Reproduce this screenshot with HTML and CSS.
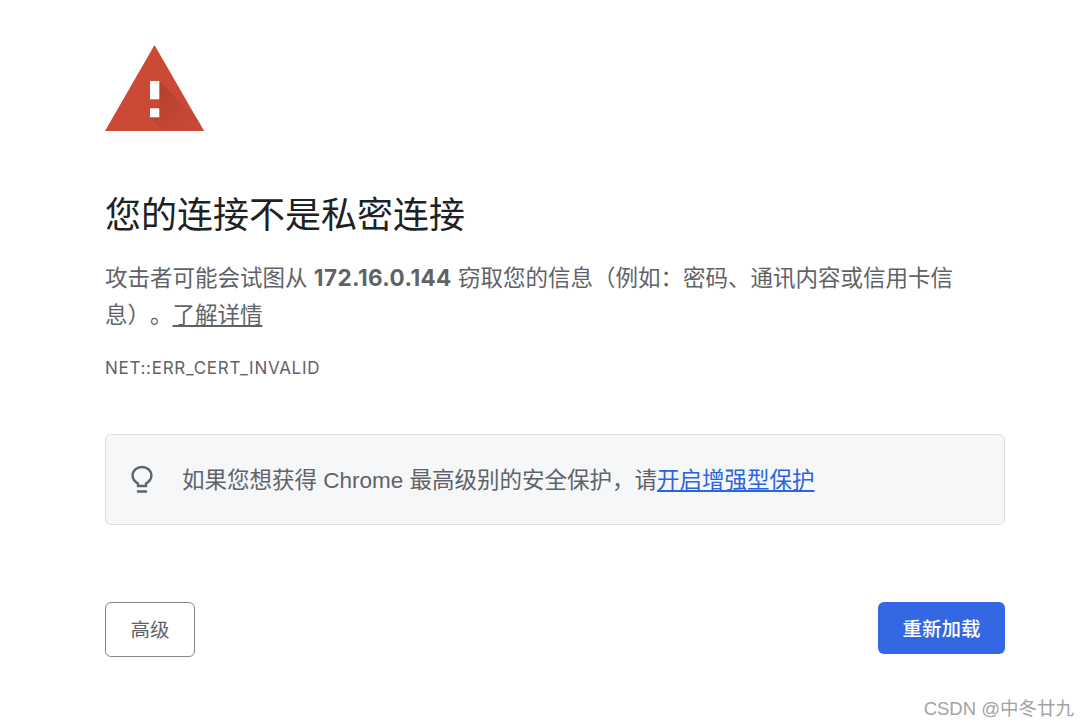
FILE: index.html
```html
<!DOCTYPE html>
<html lang="zh-CN">
<head>
    <meta charset="UTF-8">
    <title>隐私设置错误</title>
    <link rel="stylesheet" href="styles.css">
</head>
<body>
    <div class="interstitial">
        <svg class="warning-icon" width="99" height="86" viewBox="0 0 99 86">
            <defs>
                <linearGradient id="markShadow" x1="45" y1="40" x2="85" y2="80" gradientUnits="userSpaceOnUse">
                    <stop offset="0" stop-color="#b03f2e"/>
                    <stop offset="1" stop-color="#c84935"/>
                </linearGradient>
            </defs>
            <polygon points="49.500,0 99,86 0,86" fill="#cb4a36"/>
            <polygon points="54.300,36 91.800,73.500 99,86 58.700,86 45,72.300 54.300,60" fill="url(#markShadow)"/>
            <rect x="45" y="36" width="9.300" height="18.300" fill="#fff"/>
            <rect x="45" y="63.300" width="9.300" height="9" fill="#fff"/>
        </svg>

        <h1 class="title">您的连接不是私密连接</h1>

        <p class="message">攻击者可能会试图从 <strong>172.16.0.144</strong> 窃取您的信息（例如：密码、通讯内容或信用卡信息）。<a class="learn-more" href="#">了解详情</a></p>

        <div class="error-code">NET::ERR_CERT_INVALID</div>

        <div class="promo">
            <svg class="bulb-icon" width="24" height="30" viewBox="0 0 24 30" fill="none" stroke="#5f6368" stroke-width="2.400">
                <path d="M8 21 V18.600 C4.800 16.800 2.600 14.400 2.600 10.600 C2.600 5.600 6.800 2 12 2 C17.200 2 21.400 5.600 21.400 10.600 C21.400 14.400 19.200 16.800 16 18.600 V21 Z"/>
                <path d="M8 26.500 H16" stroke-linecap="round"/>
            </svg>
            <span class="promo-text">如果您想获得 Chrome 最高级别的安全保护，请<a class="promo-link" href="#">开启增强型保护</a></span>
        </div>

        <div class="actions">
            <button class="button advanced">高级</button>
            <button class="button reload">重新加载</button>
        </div>
    </div>

    <div class="watermark">CSDN @中冬廿九</div>
</body>
</html>
```

FILE: styles.css
```css
html, body {
    height: 100%;
}

body {
    margin: 0;
    background: #fff;
    color: #5f6368;
    font-family: Inter, "Noto Sans CJK SC", sans-serif;
    overflow: hidden;
}

.interstitial {
    width: 900px;
    margin-left: 105px;
    padding-top: 45px;
}

.warning-icon {
    display: block;
}

.title {
    margin: 62px 0 0;
    color: #202124;
    font-size: 36px;
    font-weight: 400;
    line-height: 44px;
}

.message {
    margin: 22px 0 0;
    font-size: 22.500px;
    line-height: 37px;
    text-spacing-trim: space-all;
}

.message strong {
    font-weight: 700;
    letter-spacing: 0.400px;
}

.learn-more {
    color: #5f6368;
}

.error-code {
    margin-top: 23px;
    font-size: 17px;
    line-height: 24px;
    letter-spacing: 0.700px;
}

.promo {
    display: flex;
    align-items: center;
    height: 91px;
    margin-top: 54px;
    padding-left: 24px;
    box-sizing: border-box;
    background: #f6f7f9;
    border: 1px solid #dadce0;
    border-radius: 6px;
}

.bulb-icon {
    flex: none;
}

.promo-text {
    margin-left: 28px;
    padding-top: 2px;
    font-family: "Liberation Sans", "Noto Sans CJK SC", sans-serif;
    font-size: 22.500px;
    line-height: 30px;
}

.promo-link {
    color: #2a64e0;
}

.actions {
    display: flex;
    justify-content: space-between;
    align-items: flex-start;
    margin-top: 77px;
}

.button {
    padding: 0 0 2px;
    font-family: inherit;
    font-size: 19.500px;
    border-radius: 6px;
    cursor: pointer;
}

.advanced {
    width: 90px;
    height: 55px;
    background: #fff;
    color: #5f6368;
    border: 1px solid #80868b;
}

.reload {
    width: 127px;
    height: 52px;
    background: #3367e3;
    color: #fff;
    border: none;
    font-weight: 500;
}

.watermark {
    position: absolute;
    right: 16px;
    top: 697px;
    color: #a3a3a3;
    font-family: "Liberation Sans", "Noto Sans CJK SC", sans-serif;
    font-size: 18.500px;
    line-height: 24px;
}
```
